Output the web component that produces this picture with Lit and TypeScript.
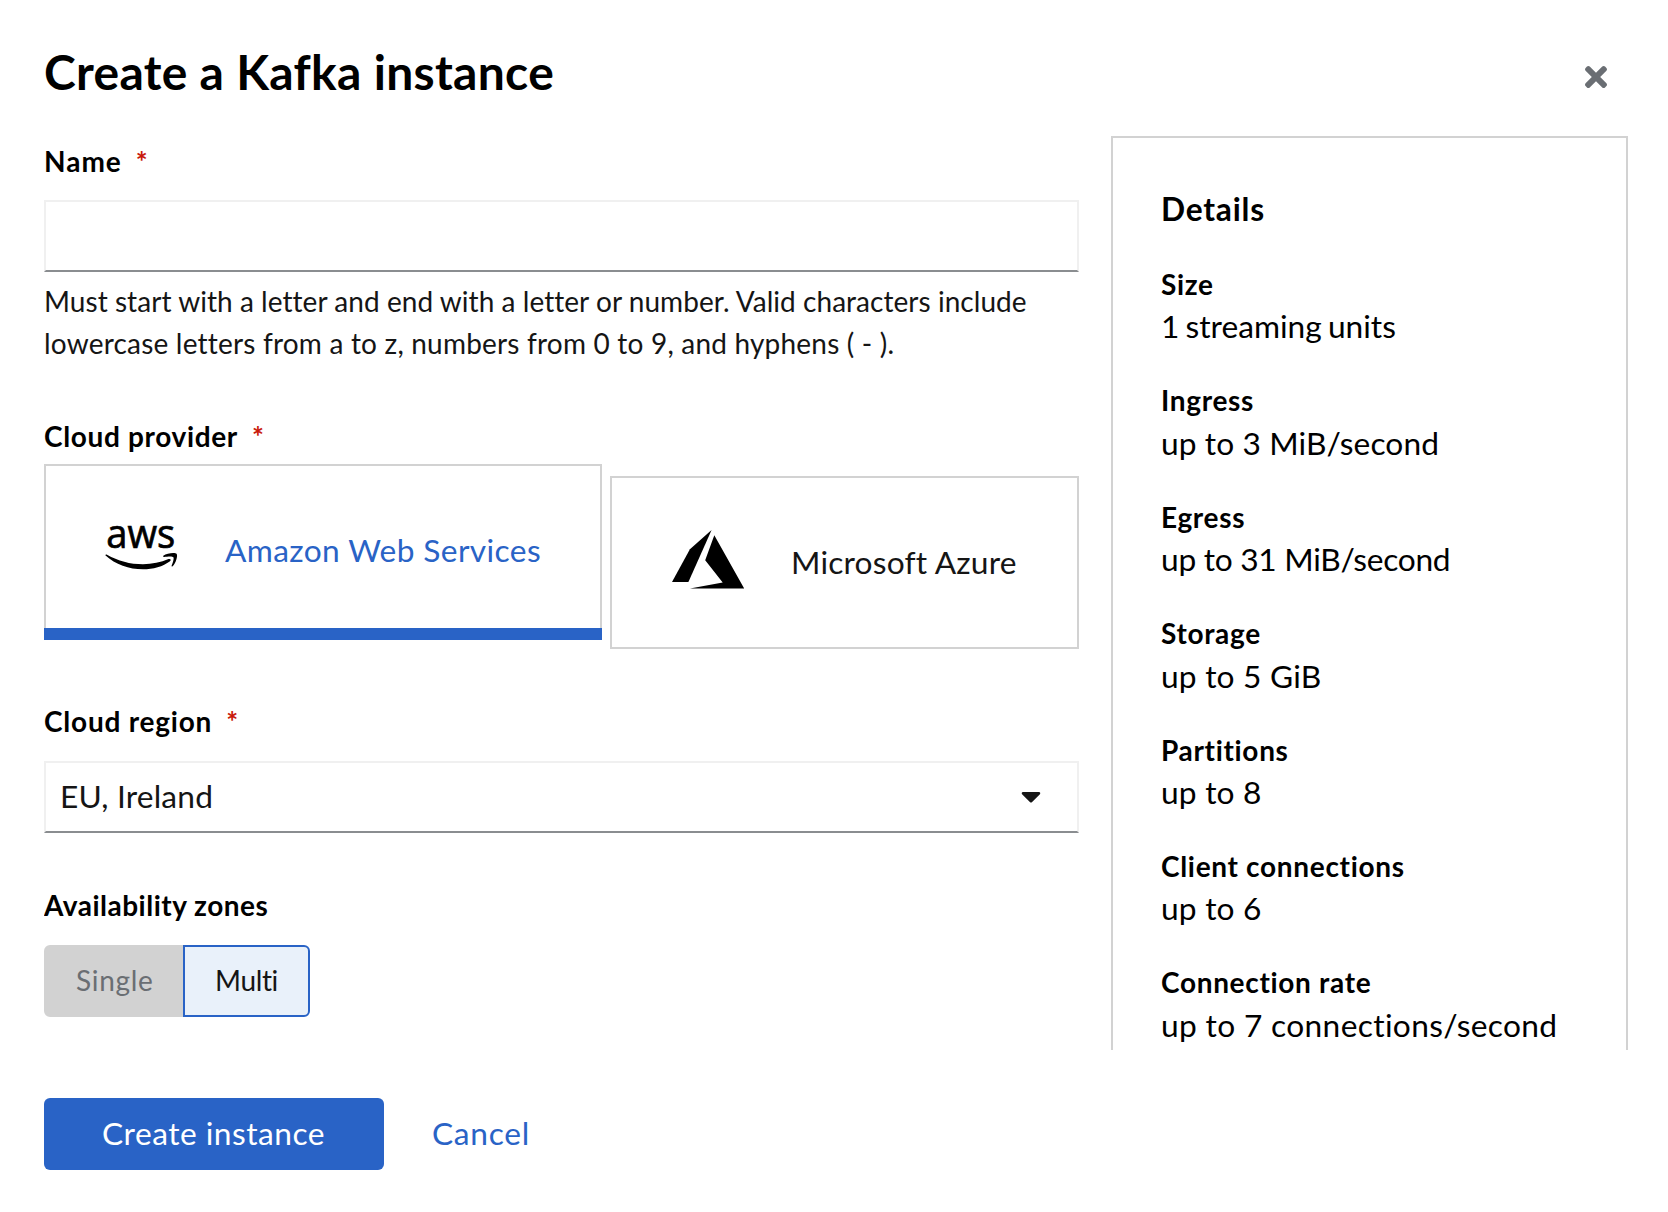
import { LitElement, html, css, svg } from "lit";
import { customElement, state } from "lit/decorators.js";

const DETAILS = [
  { label: "Size", value: "1 streaming units" },
  { label: "Ingress", value: "up to 3 MiB/second" },
  { label: "Egress", value: "up to 31 MiB/second" },
  { label: "Storage", value: "up to 5 GiB" },
  { label: "Partitions", value: "up to 8" },
  { label: "Client connections", value: "up to 6" },
  { label: "Connection rate", value: "up to 7 connections/second" },
];

const awsLogo = html`<svg class="logo aws-logo" viewBox="0 0 72 44" aria-hidden="true">
  ${svg`<text class="aws-word" x="1.2" y="22.2" textLength="69" lengthAdjust="spacingAndGlyphs">aws</text>
  <path d="M.3 29.2C.6 28.3 1.3 28.4 2 28.8C13 35 25 38.3 38 38.3C47 38.3 56 36.4 63.5 33.1C65.5 32.3 66.5 34 65 35.2C58 40.5 48 43.3 38 43.3C24 43.3 10.5 38.5 .3 29.2Z"/>
  <path d="M58.3 29.8C62 27 70.5 26.2 71.7 28C72.9 29.8 71 37 67.6 40.3C67 40.9 66.3 40.6 66.6 39.8C67.5 37.5 69.3 32.5 68.4 31.2C67.4 29.9 62 30.6 59.2 30.9C58.2 31 57.8 30.3 58.3 29.8Z"/>`}
</svg>`;

const azureLogo = html`<svg class="logo azure-logo" viewBox="0 0 72 59" aria-hidden="true">
  <path d="M0 51.9L17.9 19.3L39.6 0L16.4 51.9Z"/>
  <path d="M42.3 5.3L72.2 58.6H18L50.7 52.5L33.2 30.3Z"/>
</svg>`;

@customElement("app-root")
export class AppRoot extends LitElement {
  @state() private provider = "aws";

  static styles = css`
    :host {
      display: block;
      width: 1668px;
      height: 1212px;
      overflow: hidden;
      background: #fff;
      color: #151515;
      font-family: Lato, "Liberation Sans", sans-serif;
      font-size: 31.7px;
    }
    * { box-sizing: border-box; }
    button { font: inherit; color: inherit; border: 0; background: none; padding: 0; margin: 0; }
    h1, h2, p, dl, dt, dd { margin: 0; }
    .modal { display: flex; flex-direction: column; padding: 0 40px 0 44px; }
    .header { display: flex; justify-content: space-between; height: 136px; padding-top: 41px; }
    .title { font-size: 48px; line-height: 62px; font-weight: 700; letter-spacing: 0.3px; color: #000; }
    .close { width: 22px; height: 32px; margin: 20px 21px 0 0; }
    .close svg { display: block; width: 22px; height: 32px; fill: #6a6e73; }
    .body { display: flex; gap: 32px; height: 914px; overflow: hidden; }
    .form { width: 1035px; padding-top: 4px; }
    .label { display: flex; font-size: 28px; line-height: 42px; font-weight: 700; color: #000; }
    .label.name { letter-spacing: 1px; }
    .label.provider { letter-spacing: 0.65px; margin-top: 51px; margin-bottom: 7px; }
    .label.region { letter-spacing: 0.78px; margin-top: 51px; }
    .label.zones { letter-spacing: 0.5px; margin-top: 51px; }
    .required { color: #c9190b; font-weight: 700; margin-left: 14px; }
    .field {
      display: flex; align-items: center; justify-content: space-between;
      width: 100%; height: 72px; margin-top: 19px; padding: 0 36px 2px 14px;
      border: 2px solid #f0f0f0; border-bottom-color: #8a8d90; background: #fff;
      font-family: inherit; font-size: 31.7px; line-height: 48px; letter-spacing: 0.18px; color: #151515;
    }
    .label.name + .field { margin-top: 18px; }
    .caret { width: 20px; height: 32px; fill: #151515; }
    .helper { margin-top: 8px; font-size: 28px; line-height: 42px; }
    .helper span { display: block; white-space: nowrap; }
    .line-one { letter-spacing: 0.05px; }
    .line-two { letter-spacing: 0.2px; }
    .tiles { display: flex; gap: 8px; align-items: flex-start; }
    .tile { display: flex; align-items: flex-start; border: 2px solid #d2d2d2; line-height: 48px; text-align: left; white-space: nowrap; }
    .tile.aws { width: 558px; height: 176px; padding: 60px 0 0 59px; gap: 48px; letter-spacing: 0.38px; }
    .tile.azure { width: 469px; height: 173px; margin-top: 12px; padding: 52px 0 0 60px; gap: 47px; letter-spacing: 0.2px; }
    .tile.azure span { margin-top: 8px; }
    .tile.selected { position: relative; color: #2963c6; }
    .tile.selected::after { content: ""; position: absolute; left: -2px; right: -2px; bottom: -2px; height: 12px; background: #2963c6; }
    .logo { flex: none; fill: #000; overflow: visible; }
    .aws-logo { width: 72px; height: 44px; }
    .azure-logo { width: 72px; height: 59px; }
    .aws-word { font: 400 40px "Open Sans", sans-serif; letter-spacing: 0; stroke: #000; stroke-width: 0.7px; }
    .toggle { display: flex; margin-top: 19px; height: 72px; font-size: 28px; line-height: 67px; }
    .toggle button { border: 2px solid #d2d2d2; padding: 0 0 1px 30px; text-align: left; }
    .toggle .single { width: 139px; background: #d2d2d2; color: #6a6e73; border-radius: 6px 0 0 6px; letter-spacing: 0.7px; }
    .toggle .multi { width: 127px; background: #e9f1fa; border-color: #2963c6; border-radius: 0 6px 6px 0; letter-spacing: -0.35px; }
    .details { width: 517px; height: 1000px; flex: none; border: 2px solid #d2d2d2; padding: 47px 0 0 48px; color: #000; }
    .details h2 { font-size: 31.7px; line-height: 48px; font-weight: 700; letter-spacing: 0.8px; margin-bottom: 30px; }
    .item { margin-bottom: 32px; white-space: nowrap; }
    .item dt { font-size: 28px; line-height: 42.4px; font-weight: 700; letter-spacing: 0.68px; }
    .item dd { line-height: 42px; letter-spacing: 0.2px; }
    .item:nth-child(1) dd { letter-spacing: 0; word-spacing: -2px; }
    .item:nth-child(2) dd { letter-spacing: 0.1px; }
    .item:nth-child(3) dd { letter-spacing: -0.28px; }
    .item:nth-child(7) dd { letter-spacing: 0.34px; }
    .footer { display: flex; gap: 48px; padding-top: 48px; }
    .footer button { height: 72px; line-height: 48px; padding-bottom: 2px; }
    .footer .primary { width: 340px; text-align: left; padding-left: 58px; border-radius: 6px; background: #2963c6; color: #fff; letter-spacing: 0.48px; }
    .footer .link { color: #2963c6; letter-spacing: 0.7px; }
  `;

  render() {
    return html`<div class="modal" role="dialog">
      <div class="header">
        <h1 class="title">Create a Kafka instance</h1>
        <button class="close" aria-label="Close">
          <svg viewBox="0 0 352 512"><path d="M242.72 256l100.07-100.07c12.28-12.28 12.28-32.19 0-44.48l-22.24-22.24c-12.28-12.28-32.19-12.28-44.48 0L176 189.28 75.93 89.21c-12.28-12.28-32.19-12.28-44.48 0L9.21 111.45c-12.28 12.28-12.28 32.19 0 44.48L109.28 256 9.21 356.07c-12.28 12.28-12.28 32.19 0 44.48l22.24 22.24c12.28 12.28 32.2 12.28 44.48 0L176 322.72l100.07 100.07c12.28 12.28 32.2 12.28 44.48 0l22.24-22.24c12.28-12.28 12.28-32.19 0-44.48L242.72 256z"/></svg>
        </button>
      </div>
      <div class="body">
        <div class="form">
          <label class="label name">Name<span class="required">*</span></label>
          <input class="field" type="text" />
          <p class="helper">
            <span class="line-one">Must start with a letter and end with a letter or number. Valid characters include</span>
            <span class="line-two">lowercase letters from a to z, numbers from 0 to 9, and hyphens ( - ).</span>
          </p>
          <div class="label provider">Cloud provider<span class="required">*</span></div>
          <div class="tiles">
            <button class="tile aws ${this.provider === "aws" ? "selected" : ""}" @click=${() => (this.provider = "aws")}>${awsLogo}<span>Amazon Web Services</span></button>
            <button class="tile azure ${this.provider === "azure" ? "selected" : ""}" @click=${() => (this.provider = "azure")}>${azureLogo}<span>Microsoft Azure</span></button>
          </div>
          <div class="label region">Cloud region<span class="required">*</span></div>
          <button class="field">
            <span>EU, Ireland</span>
            <svg class="caret" viewBox="0 0 320 512"><path d="M31.3 192h257.3c17.8 0 26.7 21.5 14.1 34.1L174.1 354.7c-7.8 7.8-20.5 7.8-28.3 0L17.2 226.1C4.6 213.5 13.5 192 31.3 192z"/></svg>
          </button>
          <div class="label zones">Availability zones</div>
          <div class="toggle">
            <button class="single" disabled>Single</button>
            <button class="multi">Multi</button>
          </div>
        </div>
        <aside class="details">
          <h2>Details</h2>
          <dl>${DETAILS.map((d) => html`<div class="item"><dt>${d.label}</dt><dd>${d.value}</dd></div>`)}</dl>
        </aside>
      </div>
      <div class="footer">
        <button class="primary">Create instance</button>
        <button class="link">Cancel</button>
      </div>
    </div>`;
  }
}
